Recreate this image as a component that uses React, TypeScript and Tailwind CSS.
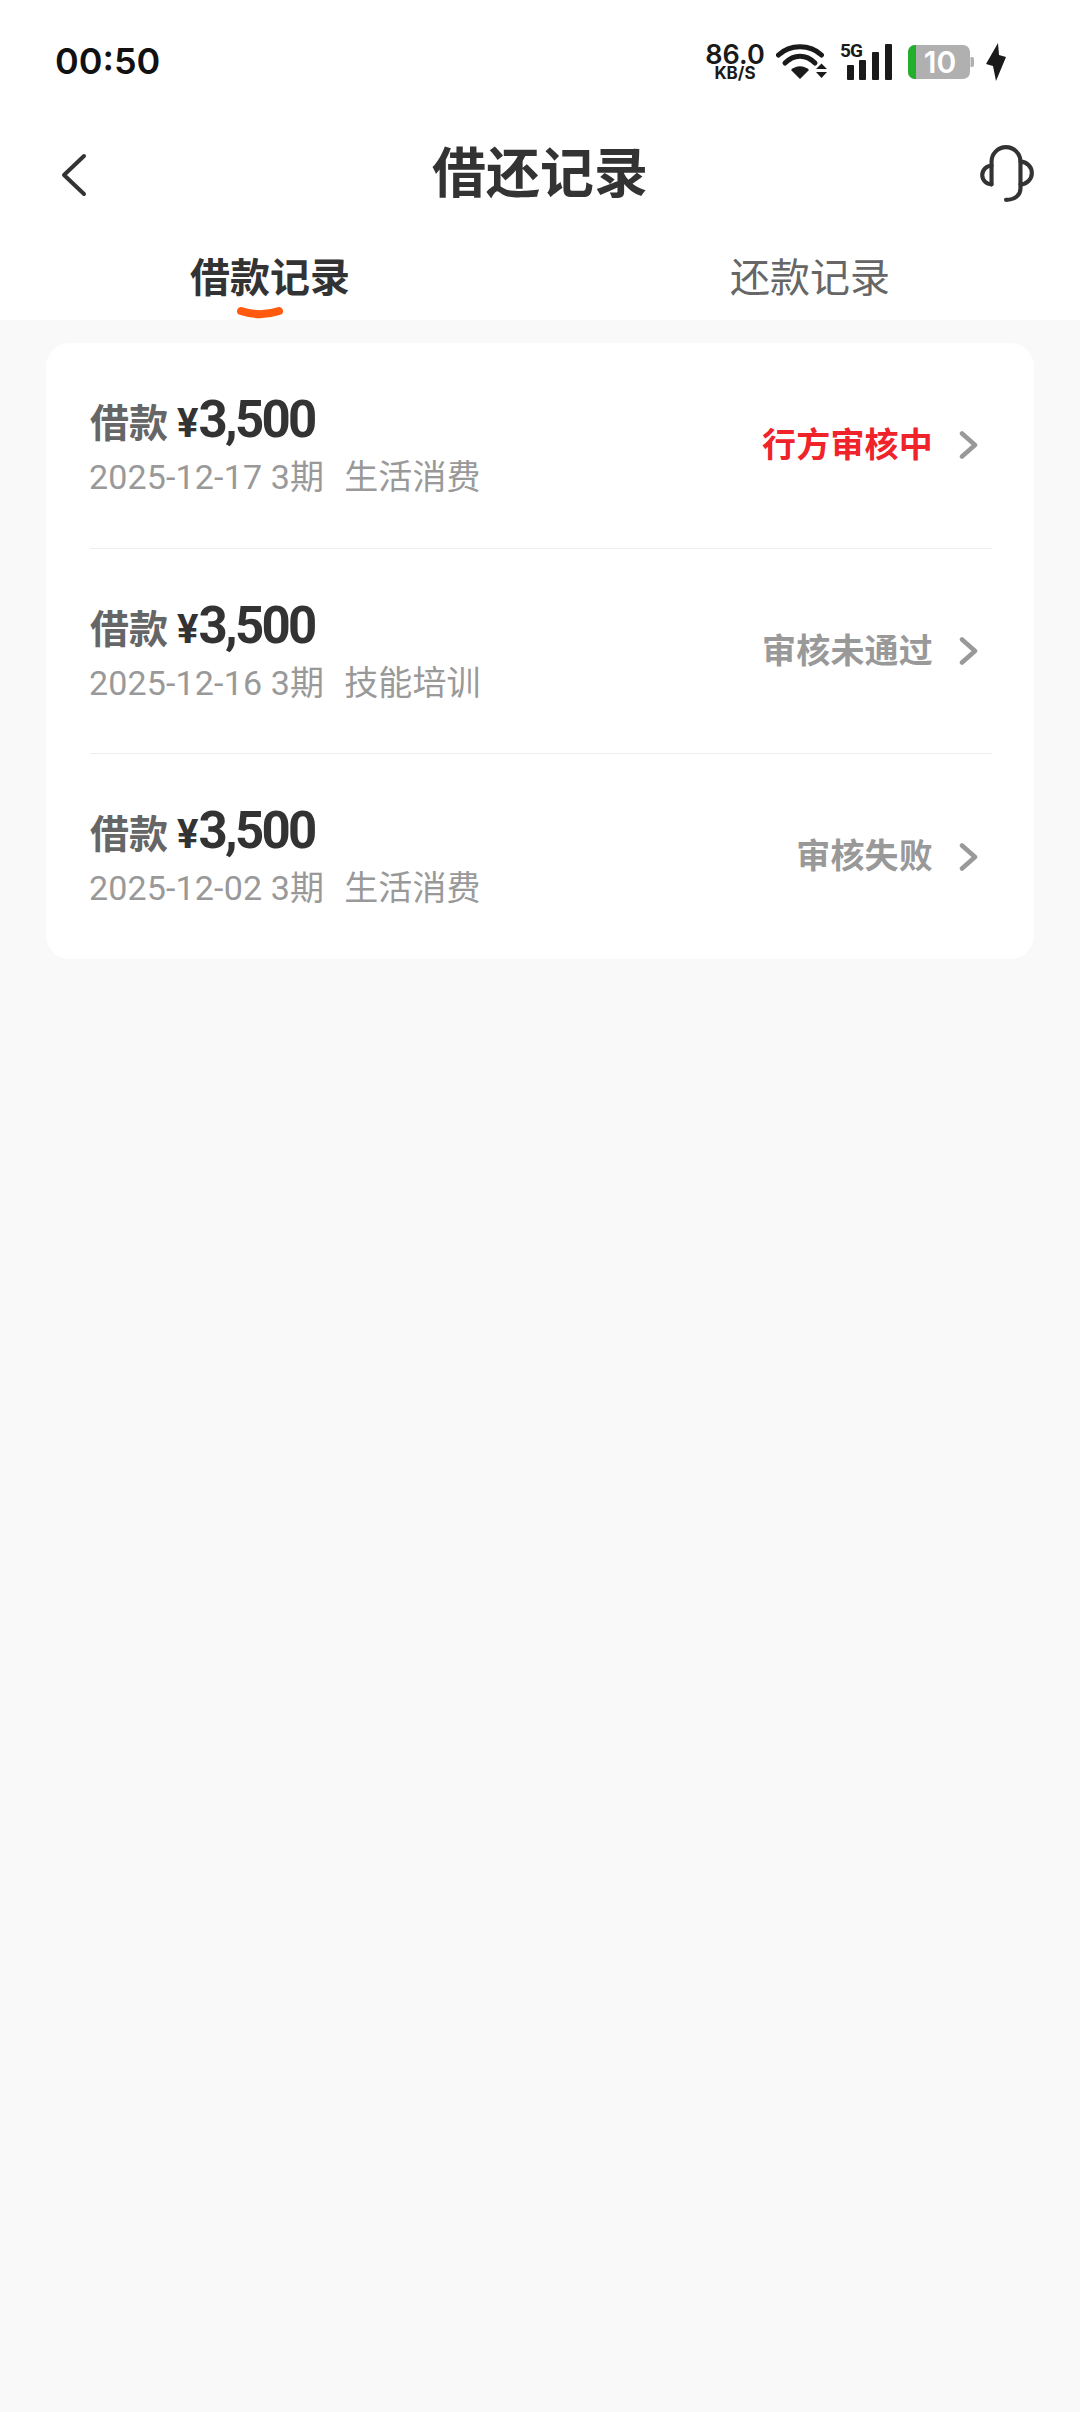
import React from "react";

const sans = "[font-family:'Roboto','Noto_Sans_CJK_SC',sans-serif]";

function Wifi() {
  return (
    <svg width="51" height="38" viewBox="0 0 51 38" className="block">
      <path d="M2.5 12 C14 1 34 1 45.5 12" fill="none" stroke="#1a1a1a" strokeWidth="5" strokeLinecap="round" />
      <path d="M9 20 C18 11 30 11 39 20" fill="none" stroke="#1a1a1a" strokeWidth="5" strokeLinecap="round" />
      <path d="M15 27 C20 22 28 22 33 27 L24 36 Z" fill="#1a1a1a" />
      <path d="M40 26 L45.5 20.5 L51 26 Z M40 29 L51 29 L45.5 35 Z" fill="#1a1a1a" />
    </svg>
  );
}

function Signal() {
  return (
    <div className="relative w-[52px] h-[38px]">
      <span className="absolute left-0 top-[-2px] text-[19px] leading-[20px] font-bold tracking-[-1px] text-[#1a1a1a] [font-family:'Roboto',sans-serif]">5G</span>
      <svg width="52" height="38" viewBox="0 0 52 38" className="block">
        <rect x="7" y="22" width="7" height="15" rx="1" fill="#1a1a1a" />
        <rect x="19" y="17" width="7" height="20" rx="1" fill="#1a1a1a" />
        <rect x="32" y="9" width="7" height="28" rx="1" fill="#1a1a1a" />
        <rect x="45" y="1" width="7" height="36" rx="1" fill="#1a1a1a" />
      </svg>
    </div>
  );
}

function Battery() {
  return (
    <div className="relative w-[66px] h-[34px] flex items-center justify-center">
      <svg width="66" height="34" viewBox="0 0 66 34" className="absolute left-0 top-0">
        <rect x="0" y="0" width="62" height="34" rx="7" fill="#b0b0b0" />
        <path d="M7 0 H8 V34 H7 A7 7 0 0 1 0 27 V7 A7 7 0 0 1 7 0 Z" fill="#22b02c" />
        <path d="M62.5 12 H64 A2 2 0 0 1 66 14 V20 A2 2 0 0 1 64 22 H62.5 Z" fill="#b0b0b0" />
      </svg>
      <span className="relative ml-[-2px] text-[30px] leading-none font-semibold text-white [font-family:'Inter',sans-serif]">10</span>
    </div>
  );
}

function Bolt() {
  return (
    <svg width="20" height="38" viewBox="0 0 20 38" className="block">
      <path d="M12 0 L0 21 L7 23 L10 38 L20 14 L13 12 Z" fill="#1a1a1a" />
    </svg>
  );
}

function Back() {
  return (
    <svg width="26" height="44" viewBox="0 0 26 44" className="block">
      <path d="M23 3 L3 22 L23 41" fill="none" stroke="#333333" strokeWidth="4" strokeLinecap="round" strokeLinejoin="round" />
    </svg>
  );
}

function Headset() {
  return (
    <svg width="62" height="62" viewBox="0 0 60 60" className="block mt-[-3px]">
      <g fill="none" stroke="#333333" strokeWidth="4" strokeLinecap="round">
        <path d="M16 40 V18 A14 14 0 0 1 44 18 V44 C44 50 39 55 30 55" />
        <path d="M16 22 A9 9 0 0 0 16 40" />
        <path d="M44 18 A11 11 0 0 1 44 40" />
      </g>
    </svg>
  );
}

function Chevron() {
  return (
    <svg width="20" height="30" viewBox="0 0 20 30" className="block">
      <path d="M3 3.5 L16 15 L3 26.5" fill="none" stroke="#999999" strokeWidth="4.5" strokeLinecap="round" strokeLinejoin="round" />
    </svg>
  );
}

const rows = [
  { date: "2025-12-17", use: "生活消费", status: "行方审核中", color: "text-[#f0222a]" },
  { date: "2025-12-16", use: "技能培训", status: "审核未通过", color: "text-[#999999]" },
  { date: "2025-12-02", use: "生活消费", status: "审核失败", color: "text-[#999999]" },
];

function Row({ date, use, status, color }: { date: string; use: string; status: string; color: string }) {
  return (
    <div className="h-[205px] flex items-center justify-between">
      <div className="flex flex-col pl-[2px]">
        <div className="h-[56px] flex items-baseline whitespace-nowrap">
          <span className="text-[39px] leading-[52px] font-bold text-[#666666]">借款</span>
          <span className="ml-[9px] text-[40px] leading-[52px] font-bold text-[#333333]">¥</span>
          <span className="text-[51px] leading-[52px] font-bold tracking-[-2.7px] text-[#333333]">3,500</span>
        </div>
        <div className="h-[40px] leading-[40px] mt-[7px] ml-[-1px] text-[34px] tracking-[0.15px] text-[#999999] whitespace-nowrap">
          <span>{date} 3期</span>
          <span className="ml-[20px]">{use}</span>
        </div>
      </div>
      <div className="flex items-center pr-[13px]">
        <span className={`text-[34px] font-bold tracking-[0.2px] ${color}`}>{status}</span>
        <span className="ml-[26px]"><Chevron /></span>
      </div>
    </div>
  );
}

export default function App() {
  return (
    <div className={`w-[1080px] h-[2412px] bg-[#f9f9f9] ${sans}`}>
      <div className="bg-white h-[320px]">
        <div className="h-[122px] pl-[55px] pr-[74px] flex items-center justify-between">
          <span className="text-[36px] font-semibold text-[#111111] [font-family:'Inter',sans-serif]">00:50</span>
          <div className="flex items-center mt-[2px]">
            <div className="flex flex-col items-center w-[58px] mr-[12px] text-[#1a1a1a] [font-family:'Inter',sans-serif]">
              <span className="text-[27px] leading-[22px] font-semibold">86.0</span>
              <span className="text-[17px] leading-[14px] font-bold">KB/S</span>
            </div>
            <Wifi />
            <span className="w-[13px]" />
            <Signal />
            <span className="w-[16px]" />
            <Battery />
            <span className="w-[12px]" />
            <Bolt />
          </div>
        </div>
        <div className="h-[106px] pl-[61px] pr-[43px] flex items-center">
          <div className="w-[60px]"><Back /></div>
          <span className="w-[838px] mr-[16px] text-center text-[54px] font-bold text-[#333333] leading-none">借还记录</span>
          <Headset />
        </div>
        <div className="h-[92px] flex">
          <div className="relative w-[540px] flex justify-center pt-[25px]">
            <span className="text-[40px] leading-[52px] font-bold text-[#333333]">借款记录</span>
            <svg width="48" height="14" viewBox="0 0 48 14" className="absolute left-[236px] top-[78px]">
              <path d="M5 5 C17 9 31 9 43 5" fill="none" stroke="#ff5a10" strokeWidth="8" strokeLinecap="round" />
            </svg>
          </div>
          <div className="w-[540px] flex justify-center pt-[25px]">
            <span className="text-[40px] leading-[52px] font-normal text-[#666666]">还款记录</span>
          </div>
        </div>
      </div>
      <div className="px-[46px] pt-[23px]">
        <div className="bg-white rounded-[24px] px-[42px] h-[616px] flex flex-col">
          {rows.map((r, i) => (
            <React.Fragment key={r.date}>
              {i > 0 && <div className="h-[1px] ml-[2px] bg-[#eeeeee] shrink-0" />}
              <Row {...r} />
            </React.Fragment>
          ))}
        </div>
      </div>
    </div>
  );
}
